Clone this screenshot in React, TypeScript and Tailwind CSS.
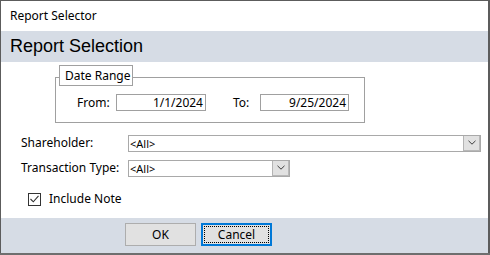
import React from "react";

const font = { fontFamily: '"Noto Sans", "Open Sans", sans-serif' };

function Chevron() {
  return (
    <svg width="8" height="5" viewBox="0 0 8 5" className="block">
      <path d="M0.5 0.8 L4 4.2 L7.5 0.8" fill="none" stroke="#3c3c3c" strokeWidth="1" />
    </svg>
  );
}

function Combo({ width }: { width: string }) {
  return (
    <div className={`flex h-[17px] ${width} border border-[#a9a9a9] bg-white`}>
      <div className="flex-1 pl-[1px] text-[11px] leading-[15px] text-black">&lt;All&gt;</div>
      <div className="flex w-[17px] items-center justify-center border-l border-[#b4b4b4] bg-[#e1e1e1] border-r border-b border-r-[#b8b8b8] border-b-[#b8b8b8]">
        <Chevron />
      </div>
    </div>
  );
}

export default function App() {
  return (
    <div className="h-[255px] w-[490px] bg-[#6e6e6e]" style={font}>
      <div className="flex h-[253px] w-[490px] flex-col border-l border-t border-r-2 border-[#5c5c5c] bg-white">
        <div className="flex h-[30px] items-center pl-[9px] text-[12px] text-black">Report Selector</div>
        <div
          className="flex h-[31px] items-center bg-[#d6dce5] pl-[9px] text-[18px] text-black"
          style={{ fontFamily: '"Liberation Sans", Arial, sans-serif' }}
        >
          Report Selection
        </div>
        <div className="flex flex-1 flex-col text-[12px] text-black">
          <div className="relative ml-[54px] mt-[15px] flex h-[46px] w-[310px] border border-[#a0a0a0] pt-[16px]">
            <div className="absolute left-[3px] top-[-13px] flex h-[21px] w-[74px] items-center border border-[#a0a0a0] bg-white pl-[5px]">
              Date Range
            </div>
            <div className="flex h-[17px] items-center">
              <span className="ml-[21px] w-[39px]">From:</span>
              <div className="flex h-[17px] w-[90px] items-center justify-end border border-[#a0a0a0] pr-[2px] leading-none">
                1/1/2024
              </div>
              <span className="ml-[27px] w-[27px]">To:</span>
              <div className="flex h-[17px] w-[89px] items-center justify-end border border-[#a0a0a0] pr-[2px] leading-none">
                9/25/2024
              </div>
            </div>
          </div>
          <div className="mt-[11px] flex items-center">
            <span className="ml-[20px] w-[107px]">Shareholder:</span>
            <Combo width="w-[353px]" />
          </div>
          <div className="mt-[7px] flex items-center">
            <span className="ml-[20px] w-[107px]">Transaction Type:</span>
            <Combo width="w-[162px]" />
          </div>
          <div className="mt-[13px] flex items-center">
            <div className="ml-[27px] flex h-[13px] w-[13px] items-center justify-center border border-[#333333] bg-white">
              <svg width="9" height="8" viewBox="0 0 9 8" className="block">
                <path d="M0.5 4 L3.3 6.8 L8.5 0.8" fill="none" stroke="#333333" strokeWidth="1.1" />
              </svg>
            </div>
            <span className="ml-[8px]">Include Note</span>
          </div>
        </div>
        <div className="flex h-[35px] items-start bg-[#d6dce5] pt-[5px] text-[12px] text-black">
          <button className="ml-[124px] flex h-[23px] w-[71px] items-center justify-center border border-[#adadad] bg-[#e1e1e1]">
            OK
          </button>
          <button className="ml-[5px] flex h-[23px] w-[71px] items-center justify-center border-2 border-[#0078d7] bg-[#e1e1e1] p-[1px]">
            <span className="flex h-full w-full items-center justify-center border border-dotted border-black">Cancel</span>
          </button>
        </div>
      </div>
    </div>
  );
}
